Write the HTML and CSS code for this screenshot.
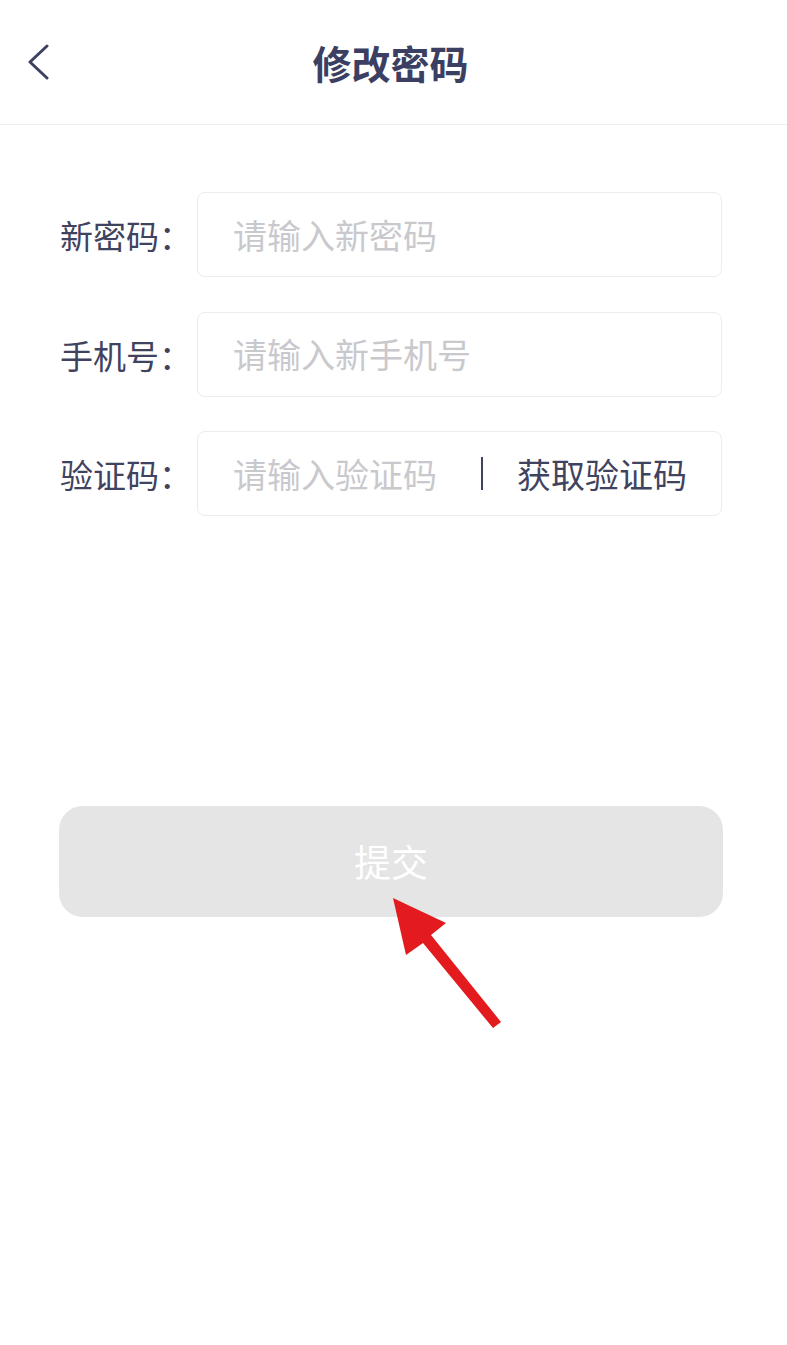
FILE: index.html
```html
<!DOCTYPE html>
<html lang="zh-CN">
<head>
<meta charset="utf-8">
<title>修改密码</title>
<link rel="stylesheet" href="styles.css">
</head>
<body>
<div class="page">
  <header class="header">
    <span class="back">
      <svg width="24" height="36" viewBox="0 0 24 36"><polyline points="20,2 3,18 20,34" fill="none" stroke="#3d4160" stroke-width="3" stroke-linecap="round" stroke-linejoin="round"/></svg>
    </span>
    <h1 class="title">修改密码</h1>
  </header>
  <main class="form">
    <div class="row">
      <label class="label">新密码：</label>
      <div class="box"><span class="placeholder">请输入新密码</span></div>
    </div>
    <div class="row">
      <label class="label">手机号：</label>
      <div class="box"><span class="placeholder">请输入新手机号</span></div>
    </div>
    <div class="row">
      <label class="label">验证码：</label>
      <div class="box box-code">
        <span class="placeholder">请输入验证码</span>
        <span class="divider"></span>
        <span class="get-code">获取验证码</span>
      </div>
    </div>
    <button class="submit">提交</button>
  </main>
  <svg class="arrow" width="787" height="1345" viewBox="0 0 787 1345">
    <polygon points="393,898 446,923 431,935 501,1022 493,1028 423,943 406,955" fill="#e31b1e"/>
  </svg>
</div>
</body>
</html>
```
FILE: styles.css
```css
* { box-sizing: border-box; }
html, body { margin: 0; padding: 0; background: #ffffff; }
body {
  font-family: "Noto Sans CJK SC", "Noto Sans", sans-serif;
  color: #3d4160;
}
.page {
  position: relative;
  width: 787px;
  height: 1345px;
  overflow: hidden;
}
.header {
  height: 125px;
  border-bottom: 1px solid #efefef;
  display: flex;
  align-items: center;
  justify-content: center;
  position: relative;
}
.back {
  position: absolute;
  left: 27px;
  top: 44px;
  width: 24px;
  height: 36px;
  display: block;
}
.back svg { display: block; }
.title {
  margin: 0 0 0 -6px;
  font-size: 39px;
  font-weight: 700;
  color: #3b4062;
  letter-spacing: 0;
  line-height: 1;
  padding-top: 0;
}
.form {
  padding: 67px 65px 0 60px;
  display: flex;
  flex-direction: column;
  gap: 34.5px;
}
.row {
  display: flex;
  align-items: center;
  height: 85px;
}
.label {
  width: 137px;
  flex: none;
  font-size: 33px;
  color: #3f4360;
  line-height: 1;
  padding-top: 2px;
}
.box {
  flex: 1;
  height: 85px;
  border: 1px solid #ececee;
  border-radius: 8px;
  display: flex;
  align-items: center;
  padding-left: 35px;
}
.placeholder {
  font-size: 34px;
  color: #c9c9cd;
  line-height: 1;
}
.box-code .placeholder { width: 248px; flex: none; }
.divider {
  width: 2px;
  height: 33px;
  background: #3f4360;
  flex: none;
}
.get-code {
  margin-left: 34px;
  font-size: 34px;
  color: #3f4360;
  line-height: 1;
}
.submit {
  margin-top: 255.5px;
  margin-left: -1px;
  height: 111px;
  border: none;
  border-radius: 24px;
  background: #e5e5e5;
  color: #ffffff;
  font-family: "Noto Sans CJK SC", "Noto Sans", sans-serif;
  font-size: 37px;
  line-height: 1;
  padding: 0;
  width: 664px;
}
.arrow {
  position: absolute;
  left: 0;
  top: 0;
  pointer-events: none;
}
```
